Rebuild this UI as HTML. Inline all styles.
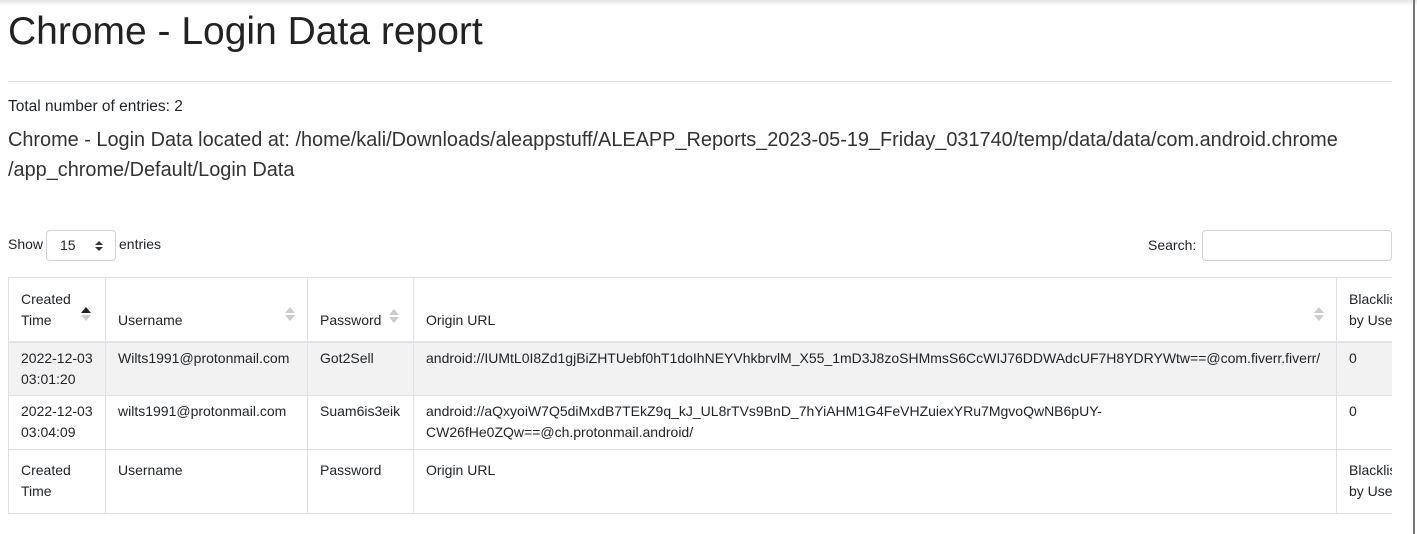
<!DOCTYPE html>
<html><head><style>
body{margin:0;width:1417px;height:534px;overflow:hidden;background:#fff;font-family:"Liberation Sans",sans-serif;color:#212529;position:relative}
.shadow{position:absolute;left:0;top:0;width:1417px;height:6px;background:linear-gradient(#e6e6e6,#fff)}
.vbar{position:absolute;left:1413px;top:0;width:2px;height:534px;background:#777}
h1{position:absolute;left:8px;top:10px;margin:0;font-size:39px;font-weight:300;color:#222}
.hr{position:absolute;left:8px;top:81px;width:1384px;height:1px;background:#ddd}
.t1{position:absolute;left:8px;top:98px;font-size:15.5px}
.t2{position:absolute;left:8px;top:125px;font-size:19.9px;line-height:30px;color:#333}
.show{position:absolute;left:8px;top:236px;font-size:14px}
.sel{position:absolute;left:46px;top:230px;width:70px;height:31px;border:1px solid #ced4da;border-radius:4px;box-sizing:border-box;font-size:14px;padding:6px 0 0 13px}
.ent{position:absolute;left:119px;top:236px;font-size:14px}
.srch{position:absolute;left:1148px;top:237px;font-size:14px}
.inp{position:absolute;left:1202px;top:230px;width:190px;height:31px;border:1px solid #ced4da;border-radius:4px;box-sizing:border-box}
.wrap{position:absolute;left:8px;top:277px;width:1384px;height:240px;overflow:hidden}
table{border-collapse:collapse;font-size:14px;table-layout:fixed;width:1460px}
td,th{border:1px solid #dee2e6;padding:0 12px;vertical-align:top;text-align:left;line-height:21px;font-weight:400;position:relative}
thead th{height:64px;border-bottom:2px solid #dee2e6;vertical-align:bottom;padding-bottom:10px;box-sizing:border-box}
tbody td{height:54px;padding-top:5px;box-sizing:border-box}
tfoot th{height:64px;padding-top:10px;vertical-align:top;box-sizing:border-box}
tr.g td{background:#f2f2f2}
.ar{position:absolute;right:12px;bottom:19px;width:10px;height:16px}
</style></head><body>
<div class="shadow"></div><div class="vbar"></div>
<h1>Chrome - Login Data report</h1>
<div class="hr"></div>
<div class="t1">Total number of entries: 2</div>
<div class="t2">Chrome - Login Data located at: /home/kali/Downloads/aleappstuff/ALEAPP_Reports_2023-05-19_Friday_031740/temp/data/data/com.android.chrome<br>/app_chrome/Default/Login Data</div>
<div class="show">Show</div>
<div class="sel">15<svg style="position:absolute;left:48px;top:10px" width="8" height="10"><path d="M0 4L4 0L8 4Z M0 6L4 10L8 6Z" fill="#333"/></svg></div>
<div class="ent">entries</div>
<div class="srch">Search:</div>
<div class="inp"></div>
<div class="wrap"><table>
<colgroup><col style="width:97px"><col style="width:202px"><col style="width:106px"><col style="width:923px"><col style="width:132px"></colgroup>
<thead><tr><th>Created<br>Time<svg class="ar" viewBox="0 0 10 16" style="right:14px;bottom:19px"><path d="M0 7L5 1L10 7Z" fill="#222"/><path d="M0 9L5 15L10 9Z" fill="#ccc"/></svg></th>
<th>Username<svg class="ar" viewBox="0 0 10 16"><path d="M0 7L5 1L10 7Z M0 9L5 15L10 9Z" fill="#ccc"/></svg></th>
<th>Password<svg class="ar" viewBox="0 0 10 16" style="right:14px;bottom:17px"><path d="M0 7L5 1L10 7Z M0 9L5 15L10 9Z" fill="#ccc"/></svg></th>
<th>Origin URL<svg class="ar" viewBox="0 0 10 16"><path d="M0 7L5 1L10 7Z M0 9L5 15L10 9Z" fill="#ccc"/></svg></th>
<th>Blacklisted<br>by User</th></tr></thead>
<tbody><tr class="g"><td>2022-12-03<br>03:01:20</td><td>Wilts1991@protonmail.com</td><td>Got2Sell</td><td>android://IUMtL0I8Zd1gjBiZHTUebf0hT1doIhNEYVhkbrvlM_X55_1mD3J8zoSHMmsS6CcWIJ76DDWAdcUF7H8YDRYWtw==@com.fiverr.fiverr/</td><td>0</td></tr>
<tr><td>2022-12-03<br>03:04:09</td><td>wilts1991@protonmail.com</td><td>Suam6is3eik</td><td>android://aQxyoiW7Q5diMxdB7TEkZ9q_kJ_UL8rTVs9BnD_7hYiAHM1G4FeVHZuiexYRu7MgvoQwNB6pUY-<br>CW26fHe0ZQw==@ch.protonmail.android/</td><td>0</td></tr></tbody>
<tfoot><tr><th>Created<br>Time</th><th>Username</th><th>Password</th><th>Origin URL</th><th>Blacklisted<br>by User</th></tr></tfoot>
</table></div>
</body></html>
